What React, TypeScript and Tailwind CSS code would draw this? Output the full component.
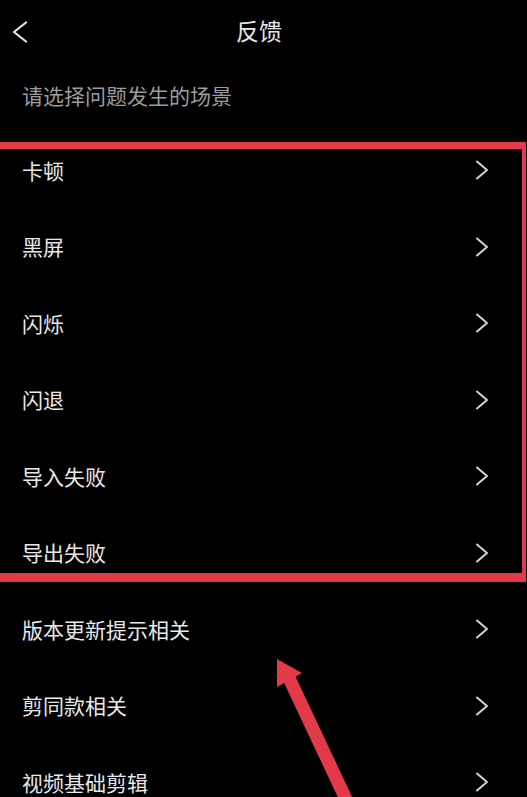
import React from "react";

const font = { fontFamily: '"Noto Sans CJK SC", "Noto Sans", sans-serif' };

const items = [
  "卡顿",
  "黑屏",
  "闪烁",
  "闪退",
  "导入失败",
  "导出失败",
  "版本更新提示相关",
  "剪同款相关",
  "视频基础剪辑",
];

function Chevron() {
  return (
    <svg width="14" height="20" viewBox="0 0 14 20" fill="none">
      <polyline points="2,1.5 12,10 2,18.5" stroke="#d4d4d4" strokeWidth="2" strokeLinecap="round" strokeLinejoin="round" />
    </svg>
  );
}

export default function App() {
  return (
    <div className="relative h-[797px] w-[527px] overflow-hidden bg-black" style={font}>
      <header className="relative flex h-16 items-center justify-center pr-[9px]">
        <button className="absolute left-[11px] top-[21px]">
          <svg width="18" height="22" viewBox="0 0 18 22" fill="none">
            <polyline points="15,1.5 3,11 15,20.5" stroke="#e5e5e5" strokeWidth="2.2" strokeLinecap="round" strokeLinejoin="round" />
          </svg>
        </button>
        <h1 className="-mt-1 text-[23px] leading-none text-[#e6e6e6]">反馈</h1>
      </header>

      <div className="h-[68px] pl-[22px] pt-[21px] text-[21px] leading-[21px] text-[#9c9c9c]">
        请选择问题发生的场景
      </div>

      <ul>
        {items.map((item) => (
          <li key={item} className="flex h-[76.5px] items-center justify-between pl-[22px] pr-[38px]">
            <span className="text-[21px] leading-none text-[#e8e8e8]">{item}</span>
            <Chevron />
          </li>
        ))}
      </ul>

      {/* annotation overlay */}
      <div className="pointer-events-none absolute left-[-5px] top-[142px] h-[440px] w-[531px] border-b-[9px] border-l-4 border-r-4 border-t-[7px] border-[#e23a48]" />
      <svg className="pointer-events-none absolute left-0 top-0" width="527" height="797" viewBox="0 0 527 797">
        <line x1="289" y1="678" x2="352" y2="812" stroke="#e23a48" strokeWidth="13" />
        <polygon points="277,659 277,687 302,673" fill="#e23a48" />
      </svg>
    </div>
  );
}
